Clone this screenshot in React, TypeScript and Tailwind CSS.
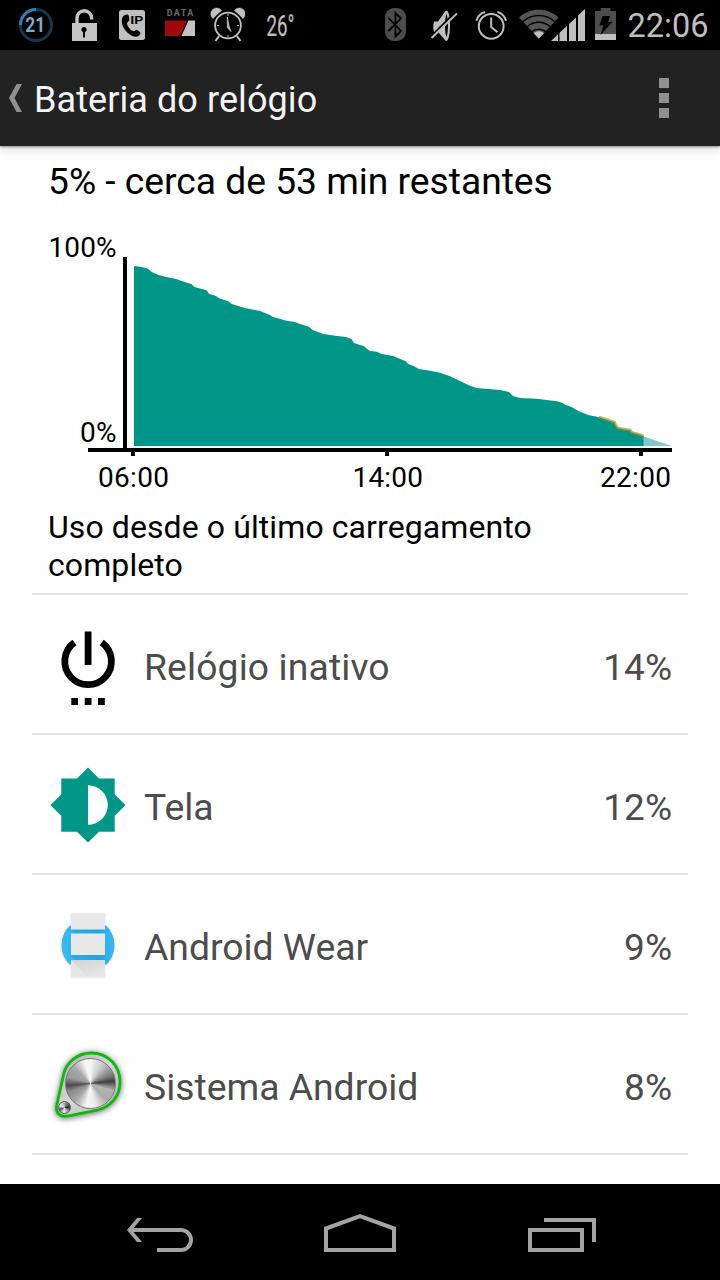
import type { ReactNode } from "react";

const chartPoints =
  "134,266 140,266.7 146,268 149,269.5 151.7,272 158,274.8 165,276.7 176,279 184,281.8 191.7,284.3 194.3,287 206,290 207.5,291.5 209.3,294 216,296 219,298.3 228.3,301.3 231.7,304 245,308 260,311 270,315 273,317 286.7,320.7 295,322 300,324 309.3,327 312.7,330 323.3,334 335,335.7 346,337 351.7,339.3 354,343 364,346.3 369.3,350.7 376.7,351.7 381.7,354 393,356 405.7,361.3 408.3,364 413,365.7 419,369 430,370.8 440,372.7 450,376.3 470,385.7 476.7,388 500,390 509,392 513,396 520,398 536.7,398.7 556.7,401.3 562.7,403 565,404.7 571.7,407 578.3,411 588.3,415 599,417.3";
const lowPoints = "599,417.3 607,419.7 614.5,422.5 616,426 618,428.3 630,430.3 631.7,432.5 638,434.3 643.7,436.3";

const StatusBar = () => (
  <div className="h-[50px] bg-black flex items-center text-[#bebebe]">
    {/* Circle battery */}
    <svg className="ml-[18px]" width="36" height="50" viewBox="18 0 36 50">
      <circle cx="36" cy="25" r="15.5" fill="none" stroke="#15364f" strokeWidth="3" />
      <path d="M20.5 25A15.5 15.5 0 0 1 36 9.5" fill="none" stroke="#2b80bd" strokeWidth="3" />
      <text x="25.3" y="32" textLength="20" lengthAdjust="spacingAndGlyphs" fontSize="19.5" fontWeight="700" fill="#7fa9cb" className="font-[Roboto,sans-serif]">21</text>
    </svg>
    {/* Unlocked */}
    <svg className="ml-4" width="28" height="50" viewBox="70 0 28 50">
      <path d="M77 23.5V18A7.3 7.3 0 0 1 91.6 18V19.5" fill="none" stroke="#c4c4c4" strokeWidth="3.4" />
      <path d="M72 23H97V41H72Z" fill="#c4c4c4" />
      <circle cx="84" cy="29.5" r="2.6" fill="#000" />
      <path d="M83 30H85V37.5H83Z" fill="#000" />
    </svg>
    {/* IP call */}
    <svg className="ml-5" width="28" height="50" viewBox="118 0 28 50">
      <rect x="119" y="10" width="26" height="30" rx="2.5" fill="#c0c0c0" />
      <path d="M124 15.5C126 14 128.3 14 128.8 16L129.4 19.8C129.6 21 127 22.2 127 23.4C127.5 27 131 30.5 133.8 31.2C135 31.4 135.7 29.5 137 29.8L140 32C141.2 33.2 140 35.5 137.5 36.6C134 37.6 129 35 125.3 30.3C120.8 24.5 121 18 124 15.5Z" fill="#000" />
      <text x="130.2" y="23.7" textLength="13.2" lengthAdjust="spacingAndGlyphs" fontSize="11.2" fontWeight="700" fill="#000" className="font-[Roboto,sans-serif]">IP</text>
    </svg>
    {/* Data meter */}
    <svg className="ml-[18px]" width="32" height="50" viewBox="164 0 32 50">
      <text x="166.7" y="15.8" textLength="26.5" fontSize="9" fontWeight="700" fill="#6a6a6a" className="font-[Roboto,sans-serif]">DATA</text>
      <path d="M165 20.5H187L180 36H165Z" fill="#a00909" />
      <path d="M188.5 20.5H195V36H181.5Z" fill="#c4c4c4" />
    </svg>
    {/* Alarm with bells */}
    <svg className="ml-[14px]" width="35" height="50" viewBox="210 0 35 50" fill="none" stroke="#c0c0c0">
      <path d="M213 18.5A5.9 5.9 0 1 1 221.5 10.5ZM243 18.5A5.9 5.9 0 1 0 234.5 10.5Z" fill="#c0c0c0" strokeWidth="0.5" />
      <circle cx="228" cy="25.5" r="14.4" fill="#000" stroke="#000" strokeWidth="1.5" />
      <circle cx="228" cy="25.5" r="12.9" strokeWidth="1.8" />
      <path d="M219 36L215.5 41M237 36L240.5 41" strokeWidth="2" />
      <path d="M227.3 17L229.2 26.5L231 31.5L227.3 27.5Z" fill="#c0c0c0" strokeWidth=".8" />
      <path d="M228 14V16M228 35V37M216.8 25.5H218.8M237.2 25.5H239.2" strokeWidth="1" />
    </svg>
    {/* Temperature */}
    <svg className="ml-[21px] overflow-visible" width="31" height="50" viewBox="266 0 31 50">
      <text x="266.5" y="36" textLength="28" lengthAdjust="spacingAndGlyphs" fontSize="30" fill="#c0c0c0" stroke="#c0c0c0" strokeWidth=".2" className="font-[Roboto,sans-serif]">26°</text>
    </svg>

    {/* Bluetooth */}
    <svg className="ml-[87px]" width="23" height="50" viewBox="384 0 23 50">
      <rect x="385" y="8" width="21" height="33" rx="9" fill="#4d4d4d" />
      <path d="M388.5 18L401 31L395.4 36.5V12.8L401 18.3L388.5 31" fill="none" stroke="#000" strokeWidth="1.8" />
    </svg>
    {/* Muted speaker */}
    <svg className="ml-[23px]" width="28" height="50" viewBox="430 0 28 50">
      <path d="M434 21.5H438L445 11.5C447.5 9 450 13 450 25C450 37 447.5 43.5 445 40L438 32H434C433 29 433 25 434 21.5Z" fill="#bebebe" />
      <path d="M446.5 14C444.5 18 444.5 33 446.5 37C448.4 33 448.4 18 446.5 14Z" fill="#000" />
      <path d="M429.5 38L455 12.4" stroke="#000" strokeWidth="2" />
      <path d="M431.5 38L457 13.4" stroke="#bebebe" strokeWidth="2" />
    </svg>
    {/* Alarm */}
    <svg className="ml-[17px]" width="33" height="50" viewBox="475 0 33 50" fill="none" stroke="#bebebe" strokeWidth="2">
      <circle cx="491.2" cy="26.3" r="12.4" />
      <path d="M491.2 17.5V27L497.5 32.3M476.4 20.8C477.7 16.2 480.5 13.2 485 12M506 20.8C504.7 16.2 501.9 13.2 497.4 12" />
    </svg>
    {/* Wifi and signal */}
    <svg className="ml-[10px]" width="68" height="50" viewBox="518 0 68 50">
      <path d="M519 17.5C530.5 7.3 547 7.3 558.5 17.5L538.8 38.5Z" fill="#555" />
      <g fill="none" stroke="#000" strokeWidth="1.5">
        <path d="M523 21.5C532 13.5 545.5 13.5 554.5 21.5" />
        <path d="M527.5 26.5C534 20.8 543.5 20.8 550 26.5" />
        <path d="M531.5 31.8C535.7 28.3 541.8 28.3 546 31.8" />
      </g>
      <path d="M533.8 33.2C536.8 30.7 540.8 30.7 543.8 33.2L538.8 38.7Z" fill="#c0c0c0" />
      <path d="M551 41L558 34.3V41ZM559.5 32.8L567 26V41H559.5ZM569 24L576 17.5V41H569ZM578 15.6L585 9V41H578Z" fill="#bebebe" />
    </svg>
    {/* Charging battery */}
    <svg className="ml-[9px]" width="22" height="50" viewBox="595 0 22 50">
      <path d="M600.7 8H610.3V11H616V34H595V11H600.7Z" fill="#4d4d4d" />
      <path d="M595 34H616V40H595Z" fill="#c0c0c0" />
      <path d="M602.5 16H610L608.2 22H612.5L600.5 35L603.5 25.5H599.5Z" fill="#000" />
    </svg>
    <svg className="ml-[10px]" width="84" height="50" viewBox="627 0 84 50">
      <text x="627.5" y="37" textLength="81" lengthAdjust="spacingAndGlyphs" fontSize="33" fill="#bebebe" className="font-[Roboto,sans-serif]">22:06</text>
    </svg>
  </div>
);

const ActionBar = () => (
  <div className="relative z-10 h-24 bg-[#222] flex items-center shadow-[0_1px_2px_rgba(0,0,0,0.4),0_3px_10px_rgba(0,0,0,0.15)]">
    <svg className="ml-2" width="15" height="30" viewBox="0 0 15 30">
      <path d="M8.5 1H14L6.5 15L14 29H8.5L1 15Z" fill="#909090" />
    </svg>
    <h1 className="ml-[11px] mt-[3px] text-[36px] leading-none tracking-[0.08px] text-[#f3f3f3]">Bateria do relógio</h1>
    <div className="ml-auto mr-[51px] flex flex-col gap-[5px]">
      <div className="size-2.5 bg-[#909090]" />
      <div className="size-2.5 bg-[#909090]" />
      <div className="size-2.5 bg-[#909090]" />
    </div>
  </div>
);

const BatteryChart = () => (
  <svg className="block" width="720" height="276" viewBox="0 220 720 276" fontSize="28">
    <polygon points="643.5,436.3 671.5,446 643.5,446" fill="#80cbc4" />
    <polygon points={`134,446 ${chartPoints} ${lowPoints} 643.7,446`} fill="#009688" />
    <polyline points={lowPoints} fill="none" stroke="#8f8812" strokeOpacity="0.6" strokeWidth="3.2" />
    <path d="M123 257H127V448H672V452H643V456H639V452H389V456H385V452H135V456H131V452H88V448H123Z" fill="#000" />
    <text x="48.5" y="257" textLength="68">100%</text>
    <text x="80" y="442" textLength="36.5">0%</text>
    <text x="98" y="487" textLength="71">06:00</text>
    <text x="352.5" y="487" textLength="70.5">14:00</text>
    <text x="600" y="487" textLength="71">22:00</text>
  </svg>
);

const PowerIcon = () => (
  <svg width="80" height="80" viewBox="0 0 80 80">
    <path d="M24.4 12.5A23.3 23.3 0 1 0 51.8 12.5" fill="none" stroke="#000" strokeWidth="6.8" />
    <path d="M34.7 1.5H41.5V35H34.7ZM21.3 68H28V75H21.3ZM34.7 68H41.5V75H34.7ZM48 68H54.8V75H48Z" />
  </svg>
);

const DisplayIcon = () => (
  <svg width="80" height="80" viewBox="0 0 80 80" className="overflow-visible">
    <path d="M38 -2.5L49 8.5H64.7V24.5L75.5 35L64.7 46V61.7H49L38 72.5L27 61.7H11.3V46L.5 35L11.3 24.5V8.5H27Z" fill="#009688" />
    <path d="M38 15.2A19.8 19.8 0 0 1 38 54.8Z" fill="#fff" />
  </svg>
);

const WearIcon = () => (
  <svg width="80" height="80" viewBox="0 0 80 80" className="drop-shadow-[0_1px_1px_rgba(0,0,0,0.12)]">
    <defs>
      <linearGradient id="wearBlue" x1="0" y1="0" x2="1" y2="0">
        <stop offset="0" stopColor="#35baf6" />
        <stop offset=".7" stopColor="#2cabe8" />
        <stop offset="1" stopColor="#36b8f2" />
      </linearGradient>
      <linearGradient id="strapShade" x1="0" y1="0" x2=".7" y2="1">
        <stop offset="0" stopColor="#d2d2d2" />
        <stop offset="1" stopColor="#e6e6e6" />
      </linearGradient>
    </defs>
    <path d="M20 15.5C9 25 8.5 45 20 54.5H56C67.5 45 67 25 56 15.5Z" fill="url(#wearBlue)" />
    <path d="M21 19H55V24H25ZM21 45H55V50H25Z" fill="#1687c4" fillOpacity=".2" />
    <path d="M21 3H55V19.5H21ZM21 23.5H55V45H21Z" fill="#e8e8e8" />
    <path d="M21 50H55V66.5H21Z" fill="#e6e6e6" />
    <path d="M21 50H55V66H37Z" fill="url(#strapShade)" />
  </svg>
);

const SystemIcon = () => (
  <div className="relative size-20">
    <svg width="80" height="80" viewBox="0 0 80 80" className="drop-shadow-[0_1px_3px_rgba(0,0,0,0.6)]">
      <defs>
        <linearGradient id="plate" x1="0" y1="0" x2="1" y2="1">
          <stop offset="0" stopColor="#aaa" />
          <stop offset=".5" stopColor="#d8d8d8" />
          <stop offset="1" stopColor="#aaa" />
        </linearGradient>
      </defs>
      <path d="M13.5 25C16 12 28 3 41.5 3C57.5 3 70 15.5 70 32C70 47 60 57 46 60.5L17 66C10 67.5 5 62 6.8 55Z" fill="url(#plate)" stroke="#08bc08" strokeWidth="2.8" />
    </svg>
    {/* Brushed metal knobs */}
    <div className="absolute left-[15px] top-[8px] size-[51px] rounded-full border border-[#777] bg-[conic-gradient(#f5f5f5_0deg,#c4c4c4_35deg,#777_70deg,#3e3e3e_84deg,#b5b5b5_108deg,#aaa_135deg,#eee_170deg,#f5f5f5_190deg,#aaa_220deg,#888_250deg,#4d4d4d_265deg,#999_286deg,#aaa_315deg,#f5f5f5_345deg,#f5f5f5_360deg)]" />
    <div className="absolute left-[8px] top-[51px] size-[13px] rounded-full border border-[#555] bg-[conic-gradient(#aaa_0deg,#666_45deg,#333_90deg,#999_130deg,#eee_190deg,#555_250deg,#eee_290deg,#aaa_360deg)]" />
  </div>
);

const usage: { name: string; percent: string; icon: ReactNode; spacing: string }[] = [
  { name: "Relógio inativo", percent: "14%", icon: <PowerIcon />, spacing: "tracking-[0.12px]" },
  { name: "Tela", percent: "12%", icon: <DisplayIcon />, spacing: "tracking-normal" },
  { name: "Android Wear", percent: "9%", icon: <WearIcon />, spacing: "tracking-normal" },
  { name: "Sistema Android", percent: "8%", icon: <SystemIcon />, spacing: "tracking-normal" },
];

const NavigationBar = () => (
  <div className="mt-auto h-24 bg-black flex items-center">
    <svg className="ml-[126px]" width="68" height="96" viewBox="126 1184 68 96" fill="none" stroke="#a3a3a3" strokeWidth="4">
      <path d="M157 1250H181A10 10 0 0 0 181 1230H130" />
      <path d="M137 1218H142L132 1230L142 1242H137L127 1230Z" fill="#a3a3a3" stroke="none" />
    </svg>
    <svg className="ml-[129px]" width="74" height="96" viewBox="323 1184 74 96" fill="none" stroke="#a3a3a3" strokeWidth="4">
      <path d="M326 1228.5L360 1216.2L394 1228.5V1250H326Z" />
    </svg>
    <svg className="ml-[130px]" width="70" height="96" viewBox="527 1184 70 96" fill="none" stroke="#a3a3a3" strokeWidth="4">
      <path d="M530 1230H582V1250H530ZM544 1220H594V1242" />
    </svg>
  </div>
);

const App = () => {
  return (
    <div className="w-[720px] h-[1280px] overflow-hidden bg-white flex flex-col font-[Roboto,sans-serif] text-black">
      <StatusBar />
      <ActionBar />

      <div className="h-[74px] px-12 pt-[14px]">
        <p className="text-[37.2px] leading-[42px] whitespace-nowrap">5% - cerca de 53 min restantes</p>
      </div>
      <BatteryChart />

      <div className="mx-8 h-[99px] border-b-2 border-[#e2e2e2] px-4 pt-3">
        <p className="w-[560px] text-[32px] leading-[38px] tracking-[0.09px]">
          Uso desde o último carregamento
          <br />
          completo
        </p>
      </div>

      <ul className="mx-8">
        {usage.map((item) => (
          <li key={item.name} className="h-[140px] border-b-2 border-[#e2e2e2] flex items-center pl-[18px] pr-4 text-[37.3px] text-[#4c4c4c]">
            <div className="size-20 shrink-0 mt-3">{item.icon}</div>
            <span className={`ml-[14px] mt-[7px] leading-none ${item.spacing}`}>{item.name}</span>
            <span className="ml-auto mt-[7px] text-[37px] leading-none">{item.percent}</span>
          </li>
        ))}
      </ul>

      <NavigationBar />
    </div>
  );
};

export default App;
